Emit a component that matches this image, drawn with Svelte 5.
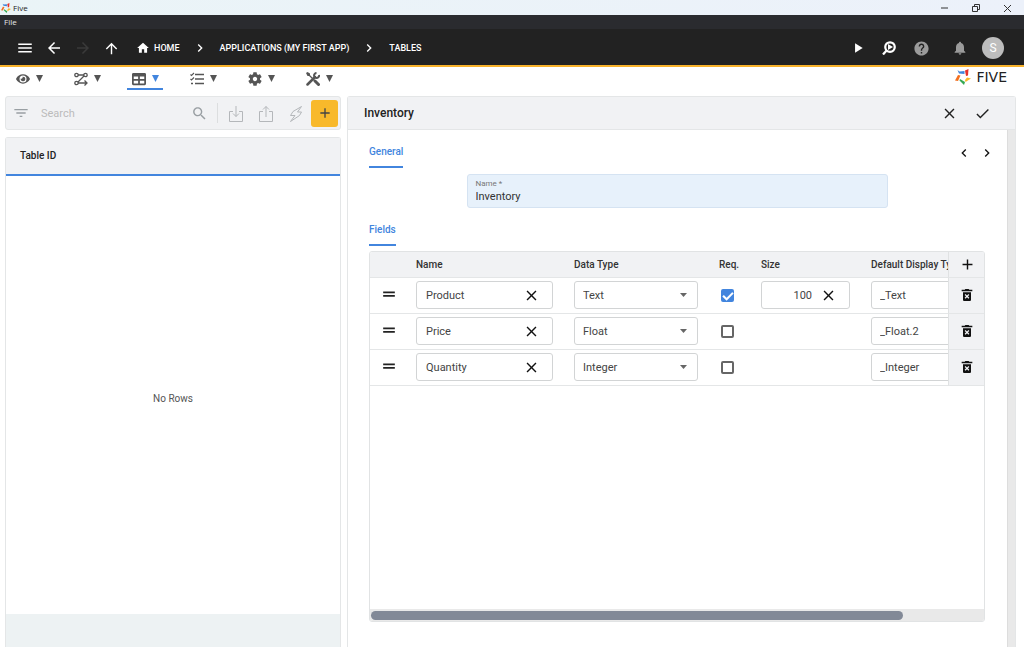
<script>
    const icons = {
        menu: 'M3 18h18v-2H3v2zm0-5h18v-2H3v2zm0-7v2h18V6H3z',
        back: 'M20 11H7.83l5.59-5.59L12 4l-8 8 8 8 1.41-1.41L7.83 13H20v-2z',
        forward: 'M12 4l-1.41 1.41L16.17 11H4v2h12.17l-5.58 5.59L12 20l8-8z',
        up: 'M4 12l1.41 1.41L11 7.83V20h2V7.83l5.58 5.59L20 12l-8-8-8 8z',
        home: 'M10 20v-6h4v6h5v-8h3L12 3 2 12h3v8z',
        left: 'M15.41 7.41L14 6l-6 6 6 6 1.41-1.41L10.83 12z',
        right: 'M10 6L8.59 7.41 13.17 12l-4.58 4.59L10 18l6-6z',
        play: 'M7 4v16l13-8z',
        help: 'M12 2C6.48 2 2 6.48 2 12s4.48 10 10 10 10-4.48 10-10S17.52 2 12 2zm1 17h-2v-2h2v2zm2.07-7.75l-.9.92C13.45 12.9 13 13.5 13 15h-2v-.5c0-1.1.45-2.1 1.17-2.83l1.24-1.26c.37-.36.59-.86.59-1.41 0-1.1-.9-2-2-2s-2 .9-2 2H8c0-2.21 1.79-4 4-4s4 1.79 4 4c0 .88-.36 1.68-.93 2.25z',
        bell: 'M12 22c1.1 0 2-.9 2-2h-4c0 1.1.89 2 2 2zm6-6v-5c0-3.07-1.64-5.64-4.5-6.32V4c0-.83-.67-1.5-1.5-1.5s-1.5.67-1.5 1.5v.68C7.63 5.36 6 7.92 6 11v5l-2 2v1h16v-1l-2-2z',
        filter: 'M2 6v2h20V6H2zm3 7h14v-2H5v2zm5 5h4v-2h-4v2z',
        search: 'M15.5 14h-.79l-.28-.27C15.41 12.59 16 11.11 16 9.5 16 5.91 13.09 3 9.5 3S3 5.91 3 9.5 5.91 16 9.5 16c1.61 0 3.09-.59 4.23-1.57l.27.28v.79l5 4.99L20.49 19l-4.99-5zm-6 0C7.01 14 5 11.99 5 9.5S7.01 5 9.5 5 14 7.01 14 9.5 11.99 14 9.5 14z',
        add: 'M19 13h-6v6h-2v-6H5v-2h6V5h2v6h6v2z',
        close: 'M19 6.41L17.59 5 12 10.59 6.41 5 5 6.41 10.59 12 5 17.59 6.41 19 12 13.41 17.59 19 19 17.59 13.41 12z',
        check: 'M9 16.17L4.83 12l-1.42 1.41L9 19 21 7l-1.41-1.41z',
        drag: 'M2 6h20v3H2zM2 12h20v3H2z',
        trash: 'M6 19c0 1.1.9 2 2 2h8c1.1 0 2-.9 2-2V8H6v11zm2.46-7.12l1.41-1.41L12 12.59l2.12-2.12 1.41 1.41L13.41 14l2.12 2.12-1.41 1.41L12 15.41l-2.12 2.12-1.41-1.41L10.59 14l-2.13-2.12zM15.5 4l-1-1h-5l-1 1H4v2.500h16V4z'
    };

    const tools = ['view', 'flow', 'table', 'tasks', 'settings', 'tools'];
    let activeTool = $state('table');
    let search = $state('');
    let tableName = $state('Inventory');

    let fields = $state([
        { name: 'Product', type: 'Text', required: true, size: '100', display: '_Text' },
        { name: 'Price', type: 'Float', required: false, size: null, display: '_Float.2' },
        { name: 'Quantity', type: 'Integer', required: false, size: null, display: '_Integer' }
    ]);

    function addField() {
        fields.push({ name: '', type: 'Text', required: false, size: '100', display: '_Text' });
    }

    function removeField(index) {
        fields.splice(index, 1);
    }
</script>

{#snippet icon(name, size)}
    <svg width={size} height={size} viewBox="0 0 24 24" fill="currentColor" aria-hidden="true"><path d={icons[name]} /></svg>
{/snippet}

{#snippet star(size)}
    <svg width={size} height={size} viewBox="0 0 32 32" aria-hidden="true">
        <path fill="#3f86dc" d="M5 2l4 3 10-1v6L8 9z" />
        <path fill="#e5322d" d="M20 3l7-3-1 13-4 1z" />
        <path fill="#f8b92b" d="M24 17l8 2-11 7-1-4z" />
        <path fill="#35a853" d="M10 20l10 6-2 6-9-9z" />
        <path fill="#f37021" d="M6 12l5 1-5 11-6-1z" />
    </svg>
{/snippet}

{#snippet toolIcon(name)}
    {#if name === 'view'}
        <svg width="14" height="14" viewBox="0 0 576 512" fill="currentColor"><path d="M572.52 241.4C518.29 135.59 410.93 64 288 64S57.68 135.64 3.48 241.41a32.35 32.35 0 0 0 0 29.19C57.71 376.41 165.07 448 288 448s230.32-71.64 284.52-177.41a32.35 32.35 0 0 0 0-29.19zM288 400a144 144 0 1 1 144-144 143.93 143.93 0 0 1-144 144zm0-240a95.31 95.31 0 0 0-25.31 3.79 47.85 47.85 0 0 1-66.9 66.9A95.78 95.78 0 1 0 288 160z" /></svg>
    {:else if name === 'flow'}
        <svg width="14" height="14" viewBox="0 0 28 28" fill="none" stroke="currentColor" stroke-width="2.6">
            <circle cx="5" cy="6" r="3.400" /><circle cx="23" cy="6" r="3.400" /><circle cx="5" cy="22" r="3.400" />
            <path d="M8 6h12M20 8L8 20M8 22h17M21 17l5 5-5 5" />
        </svg>
    {:else if name === 'table'}
        <svg width="14" height="14" viewBox="0 0 512 512" fill="currentColor"><path d="M464 32H48C21.490 32 0 53.490 0 80v352c0 26.510 21.490 48 48 48h416c26.510 0 48-21.490 48-48V80c0-26.510-21.490-48-48-48zM224 416H64v-96h160v96zm0-160H64v-96h160v96zm224 160H288v-96h160v96zm0-160H288v-96h160v96z" /></svg>
    {:else if name === 'tasks'}
        <svg width="14" height="14" viewBox="0 0 28 28" fill="none" stroke="currentColor" stroke-width="3">
            <path d="M10 5h18M10 14h18M10 23h18" />
            <path stroke-width="2.200" d="M1 5l2 2 5-5M1 14l2 2 5-5" /><path d="M2 23h4" />
        </svg>
    {:else if name === 'settings'}
        <svg width="14" height="14" viewBox="2 2 20 20" fill="currentColor"><path d="M19.14 12.94c.04-.3.06-.61.06-.94 0-.32-.02-.64-.07-.94l2.03-1.58c.18-.14.23-.41.12-.61l-1.92-3.32c-.12-.22-.37-.29-.59-.22l-2.39.96c-.5-.38-1.03-.7-1.62-.94l-.36-2.54c-.04-.24-.24-.41-.48-.41h-3.84c-.24 0-.43.17-.47.41l-.36 2.54c-.59.24-1.13.57-1.62.94l-2.39-.96c-.22-.08-.47 0-.59.22L2.74 8.87c-.12.21-.08.47.12.61l2.03 1.58c-.05.3-.09.63-.09.94s.02.64.07.94l-2.03 1.58c-.18.14-.23.41-.12.61l1.92 3.32c.12.22.37.29.59.22l2.39-.96c.5.38 1.03.7 1.62.94l.36 2.54c.05.24.24.41.48.41h3.84c.24 0 .44-.17.47-.41l.36-2.54c.59-.24 1.13-.56 1.62-.94l2.39.96c.22.08.47 0 .59-.22l1.92-3.32c.12-.22.07-.47-.12-.61l-2.01-1.58zM12 15.100c-1.700 0-3.100-1.400-3.100-3.100s1.400-3.100 3.100-3.100 3.100 1.400 3.100 3.100-1.400 3.100-3.100 3.100z" /></svg>
    {:else}
        <svg width="14" height="14" viewBox="0 0 28 28" fill="none" stroke="currentColor">
            <path stroke-width="5" d="M3 25L18 10" stroke-linecap="round" />
            <path stroke-width="4" d="M26 6a5 5 0 1 1-5-4" />
            <path stroke-width="2.600" d="M4 4l13 13" />
            <path fill="currentColor" stroke="none" d="M0 2l3-2 5 3v4L6 8H3z" />
            <path stroke-width="6" d="M18 18l7 7" stroke-linecap="round" />
        </svg>
    {/if}
{/snippet}

<div class="app">
    <header class="titlebar">
        {@render star(10)}
        <span class="title">Five</span>
        <div class="window-buttons">
            <button aria-label="Minimize"><svg width="10" height="10" viewBox="0 0 10 10"><path d="M1 5h7" /></svg></button>
            <button aria-label="Restore"><svg width="10" height="10" viewBox="0 0 10 10"><path d="M1.500 3.500h5v5h-5zM3.500 3V1.500h5V6.500H7" /></svg></button>
            <button aria-label="Close"><svg width="10" height="10" viewBox="0 0 10 10"><path d="M2 2l7 7M9 2L2 9" /></svg></button>
        </div>
    </header>

    <div class="menubar"><button>File</button></div>

    <nav class="navbar">
        <button aria-label="Menu">{@render icon('menu', 18)}</button>
        <button aria-label="Back">{@render icon('back', 18)}</button>
        <button aria-label="Forward" disabled>{@render icon('forward', 18)}</button>
        <button aria-label="Up">{@render icon('up', 17)}</button>
        <div class="crumbs">
            <a class="home" href="#home">{@render icon('home', 14)}HOME</a>
            {@render icon('right', 16)}
            <a href="#applications">APPLICATIONS (MY FIRST APP)</a>
            {@render icon('right', 16)}
            <a href="#tables">TABLES</a>
        </div>
        <div class="nav-actions">
            <button aria-label="Run">{@render icon('play', 14)}</button>
            <button aria-label="Inspect">
                <svg width="14" height="14" viewBox="0 0 28 28">
                    <path d="M2 27l8-9" stroke="#fff" stroke-width="4.500" />
                    <circle cx="16" cy="12" r="9.500" fill="#222" stroke="#fff" stroke-width="4.500" />
                    <path d="M12 6v12l10-6z" fill="#fff" />
                </svg>
            </button>
            <button class="dim" aria-label="Help">{@render icon('help', 17)}</button>
            <button class="dim bell" aria-label="Notifications">{@render icon('bell', 16)}</button>
            <button class="avatar" aria-label="Account">S</button>
        </div>
    </nav>

    <div class="toolbar">
        {#each tools as tool}
            <button class="tool" class:active={tool === activeTool} aria-label={tool} onclick={() => (activeTool = tool)}>
                <span class="tool-icon">{@render toolIcon(tool)}</span>
                <svg width="7" height="7" viewBox="0 0 7 7" fill="currentColor"><path d="M0 0h7L3.500 7z" /></svg>
            </button>
        {/each}
        <div class="brand">{@render star(16)}<span>FIVE</span></div>
    </div>

    <main class="content">
        <aside class="sidebar">
            <div class="searchbar">
                <button aria-label="Filter">{@render icon('filter', 16)}</button>
                <input type="search" placeholder="Search" aria-label="Search" bind:value={search} />
                <button class="search-icon" aria-label="Run search">{@render icon('search', 17)}</button>
                <div class="search-actions">
                    <button aria-label="Import"><svg class="line" width="16" height="18" viewBox="0 0 16 18"><path d="M5 6.500H1.500v10h13v-10H11M8 1v10.500M5 8.500l3 3 3-3" /></svg></button>
                    <button aria-label="Export"><svg class="line" width="16" height="18" viewBox="0 0 16 18"><path d="M5 6.500H1.500v10h13v-10H11M8 12V1.500M5 4.500l3-3 3 3" /></svg></button>
                    <button aria-label="Run action"><svg class="line" width="16" height="18" viewBox="0 0 16 18"><path d="M13.500 1.500L5 6.500L2.500 10.500H7L2.500 16.500L11.500 10.500L13.500 7H9.500z" /></svg></button>
                </div>
                <button class="add" aria-label="Add table">{@render icon('add', 16)}</button>
            </div>

            <section class="list">
                <h2>Table ID</h2>
                <div class="empty">No Rows</div>
                <footer></footer>
            </section>
        </aside>

        <section class="detail">
            <header class="detail-header">
                <h1>Inventory</h1>
                <button aria-label="Cancel">{@render icon('close', 17)}</button>
                <button aria-label="Save">{@render icon('check', 17)}</button>
            </header>

            <div class="detail-body">
                <div class="form">
                    <div class="tabs">
                        <button class="tab">General</button>
                        <div class="pager">
                            <button aria-label="Previous">{@render icon('left', 16)}</button>
                            <button aria-label="Next">{@render icon('right', 16)}</button>
                        </div>
                    </div>

                    <div class="name-field">
                        <label for="table-name">Name *</label>
                        <input id="table-name" type="text" bind:value={tableName} />
                    </div>

                    <div class="tabs fields-tab"><button class="tab">Fields</button></div>

                    <div class="grid">
                        <div class="grid-scroll">
                            <table>
                                <thead>
                                    <tr>
                                        <th class="col-drag"></th>
                                        <th class="col-name">Name</th>
                                        <th class="col-type">Data Type</th>
                                        <th class="col-req">Req.</th>
                                        <th class="col-size">Size</th>
                                        <th class="col-display">Default Display Type</th>
                                        <th class="col-action"><button aria-label="Add field" onclick={addField}>{@render icon('add', 17)}</button></th>
                                    </tr>
                                </thead>
                                <tbody>
                                    {#each fields as field, i}
                                        <tr>
                                            <td class="col-drag"><button aria-label="Reorder">{@render icon('drag', 14)}</button></td>
                                            <td>
                                                <div class="box name-box">
                                                    <input type="text" aria-label="Field name" bind:value={field.name} />
                                                    <button aria-label="Clear name" onclick={() => (field.name = '')}>{@render icon('close', 17)}</button>
                                                </div>
                                            </td>
                                            <td>
                                                <div class="box type-box">
                                                    <select aria-label="Data type" bind:value={field.type}>
                                                        <option>Text</option>
                                                        <option>Float</option>
                                                        <option>Integer</option>
                                                    </select>
                                                    <svg width="7" height="4" viewBox="0 0 7 4" fill="#666"><path d="M0 0h7L3.500 4z" /></svg>
                                                </div>
                                            </td>
                                            <td><input class="req" type="checkbox" aria-label="Required" bind:checked={field.required} /></td>
                                            <td>
                                                {#if field.size !== null}
                                                    <div class="box size-box">
                                                        <input type="text" aria-label="Size" bind:value={field.size} />
                                                        <button aria-label="Clear size" onclick={() => (field.size = '')}>{@render icon('close', 17)}</button>
                                                    </div>
                                                {/if}
                                            </td>
                                            <td><div class="box"><input type="text" aria-label="Default display type" bind:value={field.display} /></div></td>
                                            <td class="col-action"><button aria-label="Delete field" onclick={() => removeField(i)}>{@render icon('trash', 16)}</button></td>
                                        </tr>
                                    {/each}
                                </tbody>
                            </table>
                        </div>
                        <div class="scrollbar"><div class="thumb"></div></div>
                    </div>
                </div>
                <div class="track"></div>
            </div>
        </section>
    </main>
</div>

<style>
    :global(body) {
        margin: 0;
        background: #fff;
    }

    .app {
        display: flex;
        flex-direction: column;
        height: 100vh;
        overflow: hidden;
        font-family: Roboto, sans-serif;
        font-size: 11px;
        color: #333;
    }

    .app * {
        box-sizing: border-box;
    }

    svg {
        display: block;
        flex: none;
    }

    button {
        display: flex;
        align-items: center;
        justify-content: center;
        padding: 0;
        border: none;
        background: none;
        color: inherit;
        font: inherit;
        cursor: pointer;
    }

    input,
    select {
        min-width: 0;
        padding: 0;
        border: none;
        outline: none;
        background: none;
        color: inherit;
        font: inherit;
    }

    h1,
    h2 {
        margin: 0;
    }

    /* Window chrome */
    .titlebar {
        display: flex;
        align-items: center;
        gap: 2px;
        flex: none;
        height: 15px;
        padding: 0 12px 0 1px;
        background: linear-gradient(90deg, #eaf4f7, #ecf1fa);
        color: #222;
    }

    .title {
        font-family: "Open Sans", sans-serif;
        font-size: 8px;
    }

    .window-buttons {
        display: flex;
        gap: 21px;
        margin-left: auto;
    }

    .window-buttons path {
        fill: none;
        stroke: #333;
    }

    .menubar {
        display: flex;
        flex: none;
        height: 14px;
        padding: 0 4px 2px;
        background: #2a2b2f;
        color: #e8e8e8;
        font-family: "Open Sans", sans-serif;
        font-size: 8px;
    }

    .navbar {
        display: flex;
        align-items: center;
        gap: 11px;
        flex: none;
        height: 38px;
        padding: 2px 20px 0 16px;
        border-bottom: 2px solid #f8b22b;
        background: #222;
        color: #fff;
    }

    .navbar button:disabled {
        color: #3a3a3a;
    }

    .crumbs {
        display: flex;
        align-items: center;
        gap: 12px;
        padding-left: 5px;
        font-size: 9px;
        font-weight: 500;
        white-space: nowrap;
    }

    .crumbs a {
        color: inherit;
        text-decoration: none;
    }

    .home {
        display: flex;
        align-items: center;
        gap: 4px;
    }

    .nav-actions {
        display: flex;
        align-items: center;
        gap: 17px;
        margin-left: auto;
    }

    .dim {
        color: #9b9b9b;
    }

    .bell {
        margin-left: 5px;
    }

    .avatar {
        width: 22px;
        height: 22px;
        border-radius: 50%;
        background: #bdbdbd;
        color: #fff;
        font-size: 12px;
    }

    .navbar .avatar {
        margin-left: -3px;
    }

    .toolbar {
        display: flex;
        gap: 22px;
        flex: none;
        height: 23px;
        padding: 0 17px 0 11px;
        color: #555;
    }

    .tool {
        gap: 6px;
        width: 36px;
        padding-top: 2px;
        border-bottom: 2px solid transparent;
    }

    .tool.active {
        border-color: #4285de;
        color: #4285de;
    }

    .tool-icon {
        color: #555;
    }

    .brand {
        display: flex;
        align-items: center;
        gap: 5px;
        height: 19px;
        margin-left: auto;
        color: #222;
        font-family: "DejaVu Sans", sans-serif;
        font-size: 14px;
    }

    .content {
        display: flex;
        gap: 6px;
        flex: 1;
        min-height: 0;
        padding: 6px 8px 0 5px;
    }

    .sidebar {
        display: flex;
        flex-direction: column;
        gap: 7px;
        flex: 0 0 336px;
    }

    .searchbar {
        display: flex;
        align-items: center;
        flex: none;
        height: 34px;
        padding: 0 2px 0 7px;
        border: 1px solid #e4e6e7;
        border-radius: 3px;
        background: #f1f2f4;
        color: #999fa3;
    }

    .searchbar input {
        flex: 1;
        margin-left: 12px;
        color: #444;
    }

    .searchbar input::placeholder {
        color: #bbb;
        opacity: 1;
    }

    .search-icon {
        margin-right: 9px;
    }

    .search-actions {
        display: flex;
        gap: 14px;
        padding: 2px 7px 0 10px;
        border-left: 1px solid #dcdedf;
    }

    .line {
        fill: none;
        stroke: #b4b7ba;
    }

    .add {
        width: 27px;
        height: 27px;
        border-radius: 3px;
        background: #f8b92b;
        color: #444;
    }

    .list {
        display: flex;
        flex-direction: column;
        flex: 1;
        border: 1px solid #e4e6e7;
        border-bottom: none;
        border-radius: 3px 3px 0 0;
    }

    .list h2 {
        padding: 0 14px;
        border-bottom: 2px solid #4285de;
        background: #f1f2f4;
        color: #222;
        font-size: 10px;
        font-weight: 500;
        line-height: 36px;
    }

    .empty {
        display: flex;
        align-items: center;
        justify-content: center;
        flex: 1;
        padding-top: 6px;
        color: #555;
        font-size: 10px;
    }

    .list footer {
        height: 33px;
        background: #edf2f3;
    }

    .detail {
        display: flex;
        flex-direction: column;
        flex: 1;
        min-width: 0;
        border: 1px solid #e4e6e7;
        border-bottom: none;
        border-radius: 3px 3px 0 0;
    }

    .detail-header {
        display: flex;
        align-items: center;
        gap: 16px;
        flex: none;
        height: 33px;
        padding: 0 24px 0 16px;
        border-bottom: 1px solid #e4e6e7;
        background: #f1f2f4;
        color: #222;
    }

    .detail-header h1 {
        margin-right: auto;
        font-size: 12px;
        font-weight: 500;
    }

    .detail-body {
        display: flex;
        flex: 1;
        min-height: 0;
    }

    .form {
        display: flex;
        flex-direction: column;
        flex: 1;
        min-width: 0;
        padding: 15px 22px 25px 21px;
    }

    .track {
        width: 8px;
        border-left: 1px solid #ddd;
        background: #e9e9e9;
    }

    .tabs {
        display: flex;
        justify-content: space-between;
        margin-right: -10px;
    }

    .tab {
        padding-bottom: 7px;
        border-bottom: 2px solid #4285de;
        color: #4285de;
        font-size: 10px;
        font-weight: 500;
        line-height: 14px;
    }

    .pager {
        display: flex;
        align-items: flex-start;
        gap: 7px;
        color: #111;
    }

    .name-field {
        display: flex;
        flex-direction: column;
        align-self: center;
        width: 421px;
        max-width: 100%;
        height: 34px;
        margin-top: 6px;
        padding: 4px 8px;
        border: 1px solid #d5e3f2;
        border-radius: 3px;
        background: #e7f1fb;
    }

    .name-field label {
        color: #777;
        font-size: 8px;
        line-height: 10px;
    }

    .name-field input {
        line-height: 16px;
    }

    .fields-tab {
        margin-top: 15px;
    }

    .grid {
        display: flex;
        flex-direction: column;
        flex: 1;
        margin-top: 5px;
        border: 1px solid #e1e3e4;
        border-radius: 3px;
        overflow: hidden;
    }

    .grid-scroll {
        flex: 1;
        overflow: auto;
        scrollbar-width: none;
    }

    table {
        width: 707px;
        table-layout: fixed;
        border-spacing: 0;
    }

    th {
        height: 26px;
        padding: 0;
        border-bottom: 1px solid #e4e6e7;
        background: #f1f2f4;
        font-size: 10px;
        font-weight: 500;
        text-align: left;
    }

    td {
        height: 36px;
        padding: 0 0 1px;
        border-bottom: 1px solid #e4e6e7;
    }

    .col-drag {
        width: 46px;
    }

    .col-drag button {
        margin-left: 12px;
        color: #222;
    }

    .col-name {
        width: 158px;
    }

    .col-type {
        width: 145px;
    }

    .col-req {
        width: 42px;
    }

    .col-size {
        width: 110px;
    }

    .col-action {
        position: sticky;
        right: 0;
        width: 36px;
        border-left: 1px solid #e0e2e3;
        background: #f1f2f4;
        color: #111;
    }

    .col-action button {
        width: 100%;
        padding-left: 1px;
    }

    .box {
        display: flex;
        align-items: center;
        height: 28px;
        margin-right: 12px;
        padding: 0 8px;
        border: 1px solid #d2d4d5;
        border-radius: 3px;
        background: #fff;
        color: #444;
    }

    .box input,
    .box select {
        flex: 1;
        appearance: none;
    }

    .name-box {
        width: 137px;
        padding: 0 12px 0 9px;
    }

    .type-box {
        width: 124px;
        padding-right: 10px;
    }

    .size-box {
        width: 89px;
        padding-right: 12px;
    }

    .size-box input {
        text-align: right;
    }

    .box button {
        margin-left: 8px;
        color: #111;
    }

    .req {
        display: block;
        width: 13px;
        height: 13px;
        margin: 0 0 0 2px;
        border: 2px solid #666;
        border-radius: 2px;
        appearance: none;
    }

    .req:checked {
        border-color: #4285de;
        background: #4285de;
    }

    .req:checked::after {
        display: block;
        width: 4px;
        height: 8px;
        margin: -1px 0 0 2px;
        border: solid #fff;
        border-width: 0 2px 2px 0;
        content: "";
        transform: rotate(45deg);
    }

    .scrollbar {
        padding: 2px 1px 1px;
        background: #e9e9e9;
    }

    .thumb {
        width: 87%;
        height: 9px;
        border-radius: 5px;
        background: #828997;
    }
</style>
